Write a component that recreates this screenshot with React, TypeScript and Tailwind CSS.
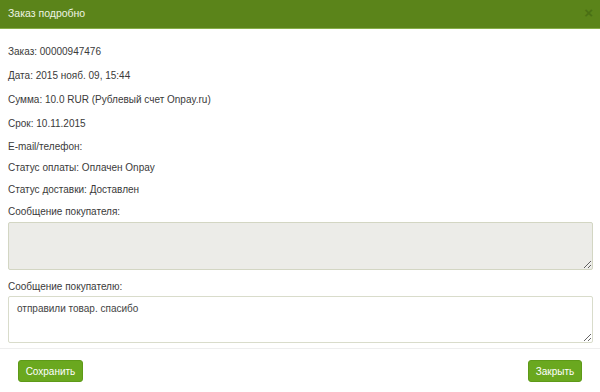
export default function App() {
  const rows = [
    { text: 'Заказ: 00000947476', h: 'h-[24px]' },
    { text: 'Дата: 2015 нояб. 09, 15:44', h: 'h-[24px]' },
    { text: 'Сумма: 10.0 RUR (Рублевый счет Onpay.ru)', h: 'h-[24px]' },
    { text: 'Срок: 10.11.2015', h: 'h-[24px]' },
    { text: 'E-mail/телефон:', h: 'h-[22px]' },
    { text: 'Статус оплаты: Оплачен Onpay', h: 'h-[20px]' },
    { text: 'Статус доставки: Доставлен', h: 'h-[24px]' },
  ];

  return (
    <div className="w-[600px] h-[392px] bg-white overflow-hidden font-['Liberation_Sans',Arial,sans-serif] text-[#3a3a3a]">
      {/* Header */}
      <div className="h-[29px] bg-[#5b841a] border-b border-[#86ad48] flex items-center justify-between pl-[8px] pr-[7px]">
        <span className="text-[10.5px] text-[#eef4e4]">Заказ подробно</span>
        <span className="text-[15px] font-bold leading-none text-[#4a7014] -mt-[4px]">×</span>
      </div>

      {/* Body */}
      <div className="pl-[8px] pr-[7px] pt-[10px]">
        {rows.map((r) => (
          <div key={r.text} className={`${r.h} flex items-center text-[10px]`}>
            {r.text}
          </div>
        ))}
        <div className="h-[21px] flex items-center text-[10px]">Сообщение покупателя:</div>
        <textarea
          readOnly
          className="block w-full h-[48px] bg-[#ecece8] border border-[#d3d6c3] rounded-[2px] outline-none text-[10px] px-[8px] py-[6px]"
        />
        <div className="mt-[6px] h-[20px] flex items-center text-[10px]">Сообщение покупателю:</div>
        <textarea
          readOnly
          defaultValue="отправили товар. спасибо"
          className="block w-full h-[47px] bg-white border border-[#d9dccb] rounded-[2px] outline-none text-[10px] text-[#444] px-[8px] py-[4px]"
        />
      </div>

      {/* Footer */}
      <div className="mt-[5px] border-t border-[#eeeeee] flex items-center justify-between px-[18px] pt-[11px]">
        <button className="h-[22px] w-[65px] bg-[#6aa81f] border border-[#5e9a18] rounded-[3px] text-white text-[10px]">
          Сохранить
        </button>
        <button className="h-[22px] w-[54px] bg-[#6aa81f] border border-[#5e9a18] rounded-[3px] text-white text-[10px]">
          Закрыть
        </button>
      </div>
    </div>
  );
}
